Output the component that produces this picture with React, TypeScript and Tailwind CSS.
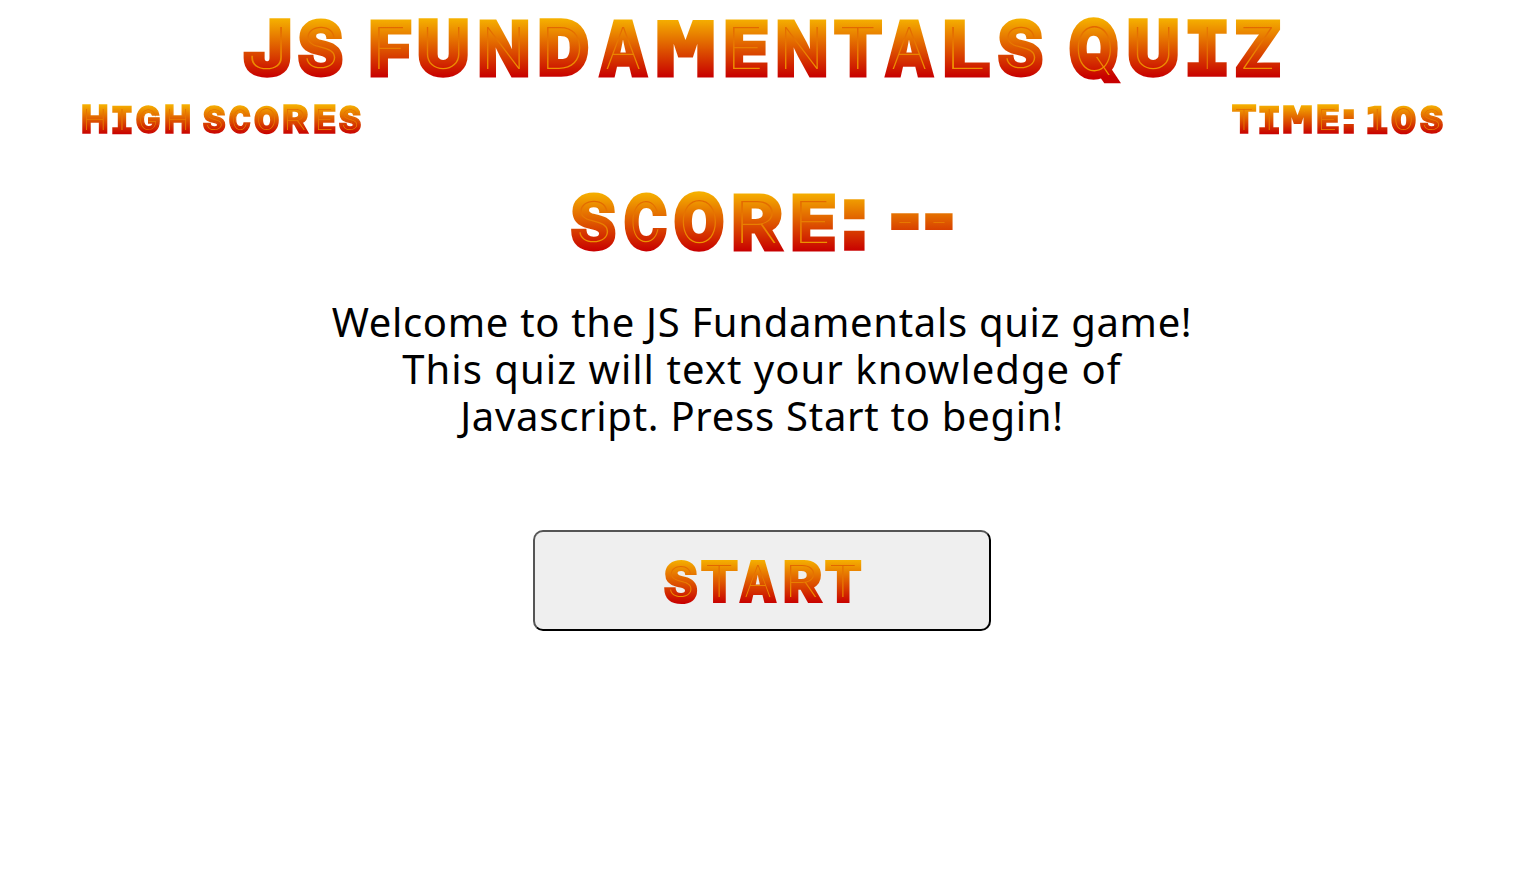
import type { CSSProperties } from "react";

type Letter = {
  ch: string;
  left: number;
  right: number;
  top?: number;
  bottom?: number;
};

const FILL_FONT = '900 80px Inter, "Liberation Sans", sans-serif';
const SLAB_FONT = 'bold 80px "DejaVu Sans Mono", monospace';
const DOTS_FONT = 'bold 80px "DejaVu Sans", sans-serif';
const LINE_FONT = '100 80px Inter, "Liberation Sans", sans-serif';
const PAD = 4;

const context = document.createElement("canvas").getContext("2d")!;

function measure(font: string, ch: string) {
  context.font = font;
  const m = context.measureText(ch);
  return {
    x: -m.actualBoundingBoxLeft,
    y: m.fontBoundingBoxAscent - m.actualBoundingBoxAscent,
    w: m.actualBoundingBoxLeft + m.actualBoundingBoxRight,
    h: m.actualBoundingBoxAscent + m.actualBoundingBoxDescent,
  };
}

function fit(
  font: string,
  ch: string,
  box: { x: number; y: number; w: number; h: number },
  stroke: number,
  cap: number,
  colors: [string, string],
): CSSProperties {
  const ink = measure(font, ch);
  const x = ink.x + PAD - stroke / 2;
  const y = ink.y + PAD - stroke / 2;
  const sx = box.w / (ink.w + stroke);
  const sy = box.h / (ink.h + stroke);
  const tx = box.x - x * sx;
  const ty = box.y - y * sy;
  return {
    font,
    lineHeight: "normal",
    transform: `translate(${tx}px, ${ty}px) scale(${sx}, ${sy})`,
    backgroundImage: `linear-gradient(to bottom, ${colors[0]} ${-ty / sy}px, ${colors[1]} ${(cap - ty) / sy}px)`,
  };
}

function Glyph({ letter, gap, cap }: { letter: Letter; gap: number; cap: number }) {
  const { ch } = letter;
  const font = ch === ":" ? DOTS_FONT : "I1M".includes(ch) ? SLAB_FONT : FILL_FONT;
  const heavy = "OJUQ0ID1".includes(ch);
  const w = letter.right - letter.left;
  const over = cap * 0.015;
  const top = letter.top ?? ("O0".includes(ch) ? -over : 0);
  const bottom = letter.bottom ?? ("OJU0".includes(ch) ? cap + over : cap);
  const fill = fit(
    font,
    ch,
    { x: 0, y: top, w, h: bottom - top },
    heavy ? 6 : 3,
    cap,
    ["#f5b000", "#c80000"],
  );
  const inset = cap * 0.14;
  const stem = ch === "I" || ch === "1";
  const lineBox = {
    x: stem ? w / 2 - 0.5 : inset,
    y: top + inset,
    w: stem ? 1 : w - inset * 2,
    h: Math.max(bottom - top - inset * 2, 1),
  };
  const line = fit(LINE_FONT, stem ? "I" : ch, lineBox, 0, cap, ["#e06000", "#f09a00"]);
  const vars = {
    width: w,
    marginLeft: gap,
    "--line-font": line.font,
    "--line-move": line.transform,
    "--line-fill": line.backgroundImage,
  } as CSSProperties;
  return (
    <span
      data-ch={ch === ":" || ch === "M" ? "" : stem ? "I" : ch}
      style={vars}
      className="relative block h-full shrink-0 whitespace-pre after:absolute after:top-0 after:left-0 after:block after:w-max after:origin-top-left after:bg-clip-text after:p-[4px] after:text-transparent after:content-[attr(data-ch)] after:[background-image:var(--line-fill)] after:[font:var(--line-font)] after:[transform:var(--line-move)]"
    >
      <span
        style={fill}
        className={
          heavy
            ? "block w-max origin-top-left bg-clip-text p-[4px] text-transparent [-webkit-text-stroke:6px_transparent]"
            : "block w-max origin-top-left bg-clip-text p-[4px] text-transparent [-webkit-text-stroke:3px_transparent]"
        }
      >
        {ch}
      </span>
    </span>
  );
}

function Spice({ letters, cap }: { letters: Letter[]; cap: number }) {
  let edge = letters[0].left;
  return (
    <span className="flex" style={{ height: cap }}>
      {letters.map((letter, i) => {
        const gap = letter.left - edge;
        edge = letter.right;
        return letter.ch === " " ? (
          <span key={i} className="block overflow-hidden whitespace-pre text-[8px]" style={{ width: letter.right - letter.left, marginLeft: gap }}>
            {" "}
          </span>
        ) : (
          <Glyph key={i} letter={letter} gap={gap} cap={cap} />
        );
      })}
    </span>
  );
}

const L = (ch: string, left: number, right: number, top?: number, bottom?: number): Letter => ({ ch, left, right, top, bottom });

const TITLE = [
  L("J", 242.7, 290), L("S", 298.3, 343.7), L(" ", 343.7, 370),
  L("F", 370, 411.7), L("U", 418.3, 468), L("N", 479, 528.3), L("D", 539, 589), L("A", 597.7, 647.7),
  L("M", 657, 714), L("E", 725, 768), L("N", 777, 826.3), L("T", 833.7, 882), L("A", 884.7, 934.7),
  L("L", 944, 990.7), L("S", 998.3, 1043.7), L(" ", 1043.7, 1069),
  L("Q", 1069, 1119, -1, 65), L("U", 1128.3, 1178), L("I", 1187.7, 1228), L("Z", 1235.3, 1280.7),
];

const HIGH_SCORES = [
  L("H", 82.3, 108), L("I", 112, 132), L("G", 136.3, 160.3), L("H", 164.7, 190), L(" ", 190, 203),
  L("S", 203, 225.7), L("C", 229.3, 251), L("O", 254.3, 279.3), L("R", 283, 309), L("E", 313.7, 335.3), L("S", 339, 361.3),
];

const TIME = [
  L("T", 1232, 1256.3), L("I", 1259, 1279.3), L("M", 1283.3, 1312.3), L("E", 1317.3, 1339.3), L(":", 1343, 1354.3, 3.7, 29),
  L(" ", 1354.3, 1366.7), L("1", 1366.7, 1387.3), L("0", 1391, 1416), L("S", 1419.7, 1443),
];

const SCORE = [
  L("S", 571.7, 617), L("C", 624, 667), L("O", 674, 724), L("R", 733.7, 784.7), L("E", 792.7, 836), L(":", 843.3, 866, 7, 58),
  L(" ", 866, 891), L("-", 891, 919, 20.7, 37.7), L("-", 925, 953, 20.7, 37.7),
];

const START = [
  L("S", 664.3, 698), L("T", 701, 737.7), L("A", 739.3, 777), L("R", 784.3, 823), L("T", 825, 861.3),
];

export default function App() {
  return (
    <main className="flex min-h-[884px] w-full flex-col items-center bg-white pt-[19.3px] text-black">
      <h1 className="pr-[1px]" aria-label="JS Fundamentals Quiz">
        <Spice letters={TITLE} cap={58} />
      </h1>
      <header className="mt-[27.7px] flex w-full justify-between pr-[81px] pl-[82.3px]">
        <a aria-label="High Scores">
          <Spice letters={HIGH_SCORES} cap={29} />
        </a>
        <p aria-label="Time: 10s">
          <Spice letters={TIME} cap={29} />
        </p>
      </header>
      <h2 className="mt-[59px]" aria-label="Score: --">
        <Spice letters={SCORE} cap={58} />
      </h2>
      <p className="mt-[47px] text-center font-['Noto_Sans',sans-serif] text-[40px] leading-[47px]">
        <span className="block tracking-[0.68px]">Welcome to the JS Fundamentals quiz game!</span>
        <span className="block tracking-[1.04px]">This quiz will text your knowledge of</span>
        <span className="block tracking-[0.73px]">Javascript. Press Start to begin!</span>
      </p>
      <button
        aria-label="Start"
        className="mt-[91px] flex h-[101px] w-[458px] items-center justify-center rounded-[10px] border-2 border-t-[#555] border-r-black border-b-black border-l-[#555] bg-[#efefef] pt-[1.5px] pl-[1px]"
      >
        <Spice letters={START} cap={43.3} />
      </button>
    </main>
  );
}
